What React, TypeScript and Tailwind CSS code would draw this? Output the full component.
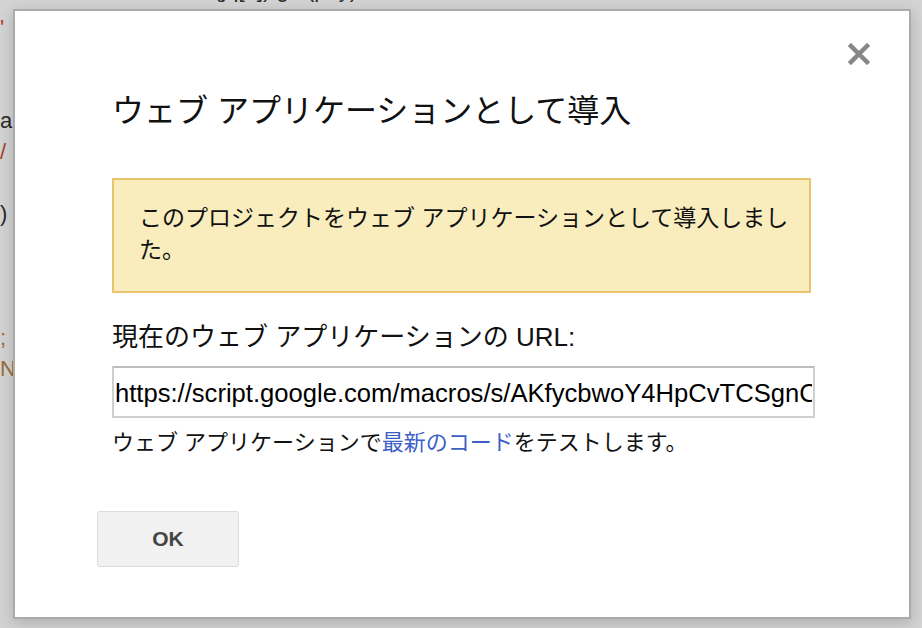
import React from 'react';

const codeLines: { text: string; color: string }[] = [
  { text: "'", color: 'text-[#c0392b]' },
  { text: '', color: '' },
  { text: '', color: '' },
  { text: 'a', color: 'text-[#2a2a2a]' },
  { text: '/', color: 'text-[#a0442c]' },
  { text: '', color: '' },
  { text: ')', color: 'text-[#2a2a2a]' },
  { text: '', color: '' },
  { text: '', color: '' },
  { text: '', color: '' },
  { text: ';', color: 'text-[#9a6a3a]' },
  { text: 'N', color: 'text-[#9a6a3a]' },
];

function CloseIcon() {
  return (
    <svg width="22" height="22" viewBox="0 0 22 22" className="opacity-90">
      <path d="M3 3 L19 19 M19 3 L3 19" stroke="#7a7a7a" strokeWidth="4.5" strokeLinecap="square" />
    </svg>
  );
}

export default function App() {
  const font = { fontFamily: '"Liberation Sans", "Noto Sans CJK JP", sans-serif' };

  return (
    <div className="relative w-[922px] h-[628px] overflow-hidden bg-[#d3d3d3]" style={font}>
      {/* editor text behind the modal backdrop */}
      <div className="flex flex-col -mt-[26px] text-[22px] leading-[31px]">
        <div className="h-[38px] whitespace-nowrap pl-[60px] text-[#2a2a2a]">
          run.withHandler(jq[0]).get(p, y);
        </div>
        {codeLines.map((line, i) => (
          <div key={i} className={`h-[31px] whitespace-nowrap ${line.color}`}>
            {line.text}
          </div>
        ))}
      </div>

      <div className="absolute left-[13px] top-[9px] w-[898px] h-[610px] bg-white border-2 border-[#ababab] shadow-[0_4px_14px_rgba(0,0,0,0.18)] pl-[97px] pr-[94px] pt-[80px] text-[#111]">
        <button className="absolute top-[32px] right-[39px] p-0">
          <CloseIcon />
        </button>

        <h1 className="text-[32px] leading-[40px] font-normal">ウェブ アプリケーションとして導入</h1>

        <div className="mt-[47px] w-[699px] border-2 border-[#e8c46c] bg-[#f9edbe] pl-[25px] pr-[10px] pt-[22px] pb-[25px] text-[23px] leading-[32px]">
          このプロジェクトをウェブ アプリケーションとして導入しました。
        </div>

        <div className="mt-[28px] text-[26px] leading-[32px]">現在のウェブ アプリケーションの URL:</div>

        <input
          readOnly
          value="https://script.google.com/macros/s/AKfycbwoY4HpCvTCSgnCqL8mZr3uW0xKpT5vE2dNhYbQ/exec"
          className="mt-[13px] block w-[703px] h-[52px] border-2 border-[#cfcfcf] border-t-[#bdbdbd] px-[1px] pt-[3px] text-[25.6px] text-black outline-none"
          style={font}
        />

        <div className="mt-[11px] text-[22px] leading-[28px]">
          ウェブ アプリケーションで<span className="text-[#3c5fc6]">最新のコード</span>をテストします。
        </div>

        <button className="mt-[54px] -ml-[15px] block w-[142px] h-[56px] rounded-[3px] border border-[#dcdcdc] bg-[#f1f1f1] text-[21px] font-bold text-[#444]">
          OK
        </button>
      </div>
    </div>
  );
}
